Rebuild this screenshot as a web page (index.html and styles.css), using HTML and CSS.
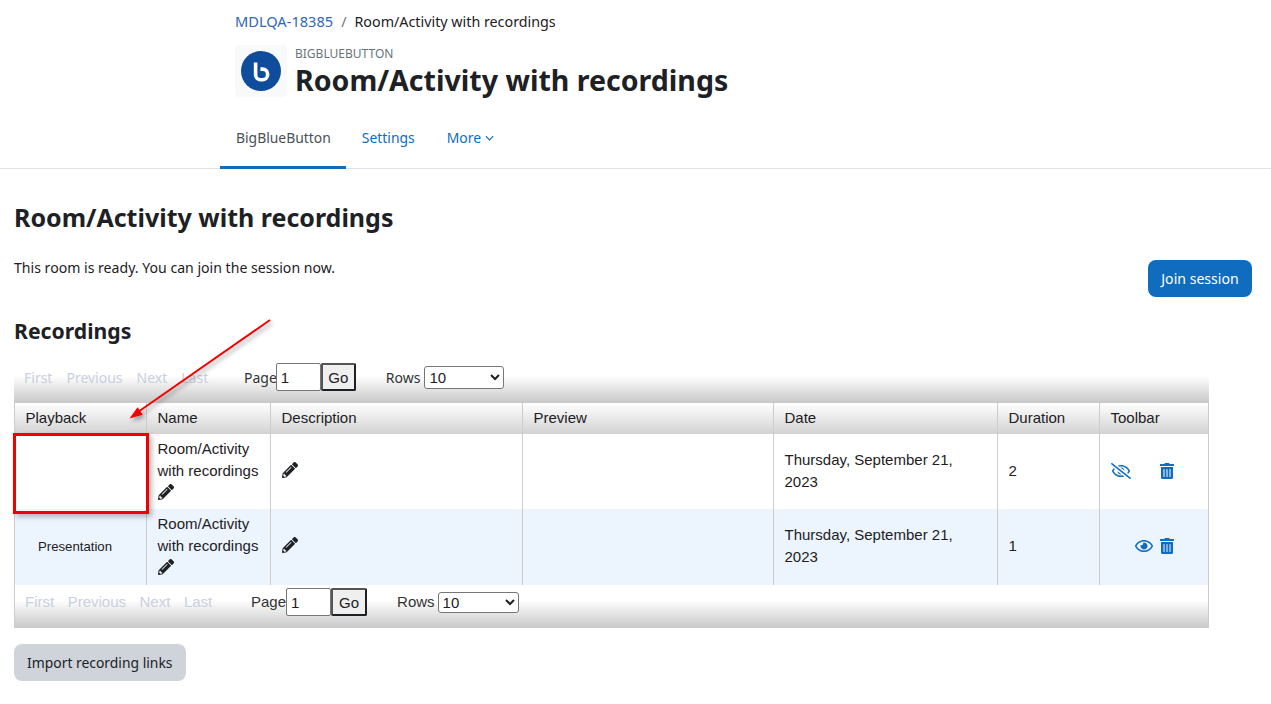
FILE: index.html
```html
<!DOCTYPE html>
<html lang="en">
<head>
<meta charset="utf-8">
<title>Room/Activity with recordings</title>
<link rel="stylesheet" href="styles.css">
</head>
<body>
<header class="head">
  <nav class="crumbs"><a href="#">MDLQA-18385</a><span class="sep">/</span><span>Room/Activity with recordings</span></nav>
  <div class="titlebar">
    <div class="modicon">
      <svg viewBox="0 0 40 40" width="40" height="40"><circle cx="20" cy="20" r="20" fill="#0f4c9c"/><path d="M14.6 11.5v12.2a5 5 0 0 0 5 5h2a5 5 0 0 0 5-5v-.6a5 5 0 0 0-5-5h-2.2" fill="none" stroke="#fff" stroke-width="3.6"/></svg>
    </div>
    <div>
      <div class="modname">BIGBLUEBUTTON</div>
      <h1>Room/Activity with recordings</h1>
    </div>
  </div>
</header>
<nav class="tabs">
  <a class="tab active" href="#">BigBlueButton</a>
  <a class="tab" href="#">Settings</a>
  <a class="tab" href="#">More <svg class="caret" viewBox="0 0 10 6" width="9" height="6"><path d="M1 1l4 4 4-4" fill="none" stroke="currentColor" stroke-width="1.300"/></svg></a>
</nav>
<main class="main">
  <h2>Room/Activity with recordings</h2>
  <div class="ready">
    <p>This room is ready. You can join the session now.</p>
    <button class="btn primary">Join session</button>
  </div>
  <h3>Recordings</h3>
  <div class="recwrap">
    <div class="pager pager-top">
      <span class="plinks"><span>First</span><span>Previous</span><span>Next</span><span>Last</span></span>
      <span class="pageset"><span class="plabel">Page</span><input class="pinput" value="1"><button class="go">Go</button></span>
      <span class="rowset"><span class="plabel">Rows</span><select class="rows"><option>10</option></select></span>
    </div>
    <table class="rec">
      <colgroup><col class="c1"><col class="c2"><col class="c3"><col class="c4"><col class="c5"><col class="c6"><col class="c7"></colgroup>
      <thead><tr><th>Playback</th><th>Name</th><th>Description</th><th>Preview</th><th>Date</th><th>Duration</th><th>Toolbar</th></tr></thead>
      <tbody>
        <tr>
          <td></td>
          <td>Room/Activity with recordings <svg class="pen" viewBox="0 0 512 512"><use href="#pencil"/></svg></td>
          <td class="desc"><svg class="pen" viewBox="0 0 512 512"><use href="#pencil"/></svg></td>
          <td></td>
          <td>Thursday, September 21, 2023</td>
          <td>2</td>
          <td class="tools"><svg class="eye" viewBox="0 0 640 512"><use href="#eyeslash"/></svg><svg class="trash far" viewBox="0 0 448 512"><use href="#trash"/></svg></td>
        </tr>
        <tr class="alt">
          <td class="pb">Presentation</td>
          <td>Room/Activity with recordings <svg class="pen" viewBox="0 0 512 512"><use href="#pencil"/></svg></td>
          <td class="desc"><svg class="pen" viewBox="0 0 512 512"><use href="#pencil"/></svg></td>
          <td></td>
          <td>Thursday, September 21, 2023</td>
          <td>1</td>
          <td class="tools center"><svg class="eye2" viewBox="0 0 576 512"><use href="#eye"/></svg><svg class="trash" viewBox="0 0 448 512"><use href="#trash"/></svg></td>
        </tr>
      </tbody>
    </table>
    <div class="pager pager-bottom">
      <span class="plinks"><span>First</span><span>Previous</span><span>Next</span><span>Last</span></span>
      <span class="pageset"><span class="plabel">Page</span><input class="pinput" value="1"><button class="go">Go</button></span>
      <span class="rowset"><span class="plabel">Rows</span><select class="rows"><option>10</option></select></span>
    </div>
    <div class="redbox"></div>
    <svg class="arrow" viewBox="0 0 160 110" width="160" height="110">
      <path d="M142 1L10 93" stroke="#f50000" stroke-width="2" fill="none"/>
      <path d="M1.500 99.500L14.800 95.700 9.600 88.300z" fill="#f50000"/>
    </svg>
  </div>
  <button class="btn secondary">Import recording links</button>
</main>
<svg class="defs" width="0" height="0" aria-hidden="true">
  <defs>
    <path id="pencil" d="M497.900 142.100l-46.100 46.100c-4.700 4.700-12.300 4.700-17 0l-111-111c-4.700-4.700-4.700-12.300 0-17l46.100-46.100c18.700-18.700 49.100-18.700 67.900 0l60.100 60.100c18.800 18.700 18.800 49.100 0 67.900zM284.200 99.800L21.600 362.400.4 483.900c-2.900 16.400 11.400 30.600 27.800 27.800l121.500-21.300 262.600-262.600c4.700-4.700 4.700-12.300 0-17l-111-111c-4.800-4.700-12.400-4.700-17.100 0zM124.100 339.900c-5.500-5.500-5.500-14.300 0-19.800l154-154c5.500-5.500 14.300-5.500 19.800 0s5.500 14.300 0 19.800l-154 154c-5.500 5.500-14.300 5.500-19.800 0zM88 424h48v36.300l-64.500 11.300-31.100-31.100L51.700 376H88v48z"/>
    <path id="trash" d="M32 464a48 48 0 0 0 48 48h288a48 48 0 0 0 48-48V128H32zm272-256a16 16 0 0 1 32 0v224a16 16 0 0 1-32 0zm-96 0a16 16 0 0 1 32 0v224a16 16 0 0 1-32 0zm-96 0a16 16 0 0 1 32 0v224a16 16 0 0 1-32 0zM432 32H312l-9.400-18.700A24 24 0 0 0 281.100 0H166.800a23.720 23.720 0 0 0-21.400 13.300L136 32H16A16 16 0 0 0 0 48v32a16 16 0 0 0 16 16h416a16 16 0 0 0 16-16V48a16 16 0 0 0-16-16z"/>
    <path id="eye" d="M288 144a110.940 110.940 0 0 0-31.240 5 55.400 55.400 0 0 1 7.240 27 56 56 0 0 1-56 56 55.400 55.400 0 0 1-27-7.240A111.710 111.710 0 1 0 288 144zm284.520 97.400C518.290 135.590 410.930 64 288 64S57.680 135.640 3.480 241.410a32.350 32.350 0 0 0 0 29.190C57.710 376.410 165.070 448 288 448s230.320-71.640 284.520-177.410a32.350 32.350 0 0 0 0-29.190zM288 400c-98.650 0-189.090-55-237.930-144C98.910 167 189.340 112 288 112s189.090 55 237.930 144C477.100 345 386.660 400 288 400z"/>
    <path id="eyeslash" d="M634 471L36 3.510A16 16 0 0 0 13.510 6l-10 12.490A16 16 0 0 0 6 41l598 467.490a16 16 0 0 0 22.490-2.490l10-12.490A16 16 0 0 0 634 471zM296.790 146.470l134.790 105.380C429.360 191.910 380.480 144 320 144a112.260 112.260 0 0 0-23.210 2.470zm46.420 219.070L208.420 260.160C210.650 320.090 259.530 368 320 368a113 113 0 0 0 23.210-2.460zM320 112c98.650 0 189.090 55 237.930 144a285.530 285.530 0 0 1-44 60.200l37.740 29.500a333.700 333.700 0 0 0 52.900-75.110 32.350 32.350 0 0 0 0-29.190C550.290 135.590 442.930 64 320 64c-36.700 0-71.710 7-104.630 18.810l46.410 36.290c18.940-4.300 38.340-7.100 58.220-7.100zm0 288c-98.650 0-189.080-55-237.930-144a285.470 285.470 0 0 1 44.050-60.190l-37.740-29.500a333.600 333.600 0 0 0-52.890 75.100 32.350 32.350 0 0 0 0 29.190C89.720 376.410 197.080 448 320 448c36.700 0 71.710-7.050 104.630-18.810l-46.410-36.280C359.280 397.200 339.890 400 320 400z"/>
  </defs>
</svg>
</body>
</html>
```
FILE: styles.css
```css
* { box-sizing: border-box; }
html, body { margin: 0; padding: 0; }
body { background: #fff; color: #1d2125; font-family: "Noto Sans", "Open Sans", sans-serif; font-size: 14.100px; overflow: hidden; }
a { color: #0f6cbf; text-decoration: none; }
.defs { display: block; height: 0; }

.head { padding: 11px 0 0 235px; }
.crumbs { display: flex; align-items: center; height: 20px; font-size: 14.300px; }
.crumbs a { color: #2f66b8; font-size: 14.600px; }
.sep { margin: 0 8px; color: #6a737b; }
.titlebar { display: flex; gap: 8px; margin-top: 14px; height: 52px; }
.modicon { width: 52px; height: 52px; background: #f8f9fa; border-radius: 4px; display: flex; align-items: center; justify-content: center; flex: none; }
.modname { font-size: 12px; line-height: 16px; color: #6a737b; margin-top: 1px; }
h1 { margin: 0; font-size: 28.550px; line-height: 36px; font-weight: 700; white-space: nowrap; }

.tabs { display: flex; margin-top: 10px; padding-left: 220px; border-bottom: 1px solid #dee2e6; height: 62px; }
.tab { display: flex; align-items: center; gap: 4px; padding: 1px 16px 0; height: 62px; color: #0f6cbf; border-bottom: 3px solid transparent; font-size: 13.900px; }
.tab.active { color: #495057; border-bottom-color: #0f6cbf; padding-right: 15px; }
.caret { margin-top: 1px; }

.main { padding: 0 14px; }
h2 { margin: 31px 0 0; font-size: 25px; line-height: 34px; font-weight: 700; }
.ready { display: flex; justify-content: space-between; align-items: flex-start; padding-right: 5px; margin-top: 24px; height: 39px; }
.ready p { margin: 0; line-height: 20px; }
.btn { border: 0; border-radius: 8px; height: 37px; font: 13.900px "Noto Sans", sans-serif; padding: 0 13px; }
.primary { background: #0f6cbf; color: #fff; margin-top: 2px; width: 104px; font-size: 14.100px; }
.secondary { background: #ced4da; color: #1d2125; margin-top: 16px; }
h3 { margin: 20px 0 0; font-size: 21.200px; line-height: 28px; font-weight: 700; }

.recwrap { position: relative; width: 1195px; margin-top: 16px; font-family: "Liberation Sans", Arial, sans-serif; }
.pager { display: flex; align-items: center; background: linear-gradient(#fff 35%, #c8c8c8); }
.pager-top { height: 42px; font-family: "Noto Sans", sans-serif; font-size: 14px; padding-left: 10px; padding-bottom: 10px; }
.pager-bottom { height: 43px; font-size: 15px; padding-left: 10px; padding-bottom: 9px; border: solid #ccc; border-width: 0 1px; }
.plinks { display: flex; color: #c9cfe0; }
.pager-top .plinks { width: 220px; gap: 14px; }
.pager-bottom .plinks { width: 226px; gap: 13.500px; margin-bottom: 2px; }
.pageset { display: flex; align-items: center; color: #333; }
.rowset { display: flex; align-items: center; gap: 3px; color: #333; margin-left: 30px; }
.pager-top .rowset { gap: 4px; }
.pager-bottom .plabel { margin-bottom: 2px; }
.pinput { width: 45px; height: 28px; padding: 1px 4px; font: 15px "Liberation Sans", sans-serif; border: 1px solid #767676; border-radius: 2px; background: #fff; color: #1d2125; }
.pager-top .pinput { margin-left: -1px; }
.go { width: 35px; height: 28px; padding: 0; font: 15px "Liberation Sans", sans-serif; background: #efefef; border: 2px solid #1d2125; border-top-color: #555; border-left-color: #555; border-radius: 2px; color: #1d2125; }
.pager-bottom .go { width: 36px; }
.rows { height: 23px; width: 80px; font: 15px "Liberation Sans", sans-serif; border: 1px solid #767676; border-radius: 3px; background: #fff; color: #1d2125; }
.pager-bottom .rows { width: 81px; height: 21px; }

.rec { border-collapse: collapse; table-layout: fixed; width: 1194px; font-size: 15px; line-height: 22px; }
.c1 { width: 132px; } .c2 { width: 124px; } .c3 { width: 252px; } .c4 { width: 251px; } .c5 { width: 224px; } .c6 { width: 102px; } .c7 { width: 109px; }
.rec th { height: 31px; padding: 0 10.500px 2px; text-align: left; font-weight: 400; background: linear-gradient(#fff, #d2d2d2); border: 1px solid #ccc; border-width: 0 1px; }
.rec td { padding: 0 10.500px 2px; vertical-align: middle; border: 1px solid #ccc; border-width: 0 1px; }
.rec tbody tr { height: 75px; }
.rec tbody tr.alt { height: 76px; }
.alt td { background: #ecf4fd; }
.rec td.pb { font-size: 13.200px; text-align: center; padding: 0 21px 0 10px; }
.pen { width: 16px; height: 16px; display: inline-block; vertical-align: -2px; fill: #1d2125; }
.alt .desc svg { margin-top: 2px; }
.tools svg { fill: #0f6cbf; vertical-align: middle; }
.eye { width: 20px; height: 16px; }
.eye2 { width: 18px; height: 16px; margin-right: 7px; }
.trash { width: 14px; height: 16px; }
.far { margin-left: 29px; }
.center { text-align: center; }
.rec td.tools { padding-bottom: 4px; }

.redbox { position: absolute; left: -1px; top: 72px; width: 136px; height: 81px; border: 3px solid #f00000; box-shadow: 3px 3px 5px rgba(0,0,0,.25); }
.arrow { position: absolute; left: 114px; top: -42px; filter: drop-shadow(2px 3px 2px rgba(0,0,0,.35)); }
```
